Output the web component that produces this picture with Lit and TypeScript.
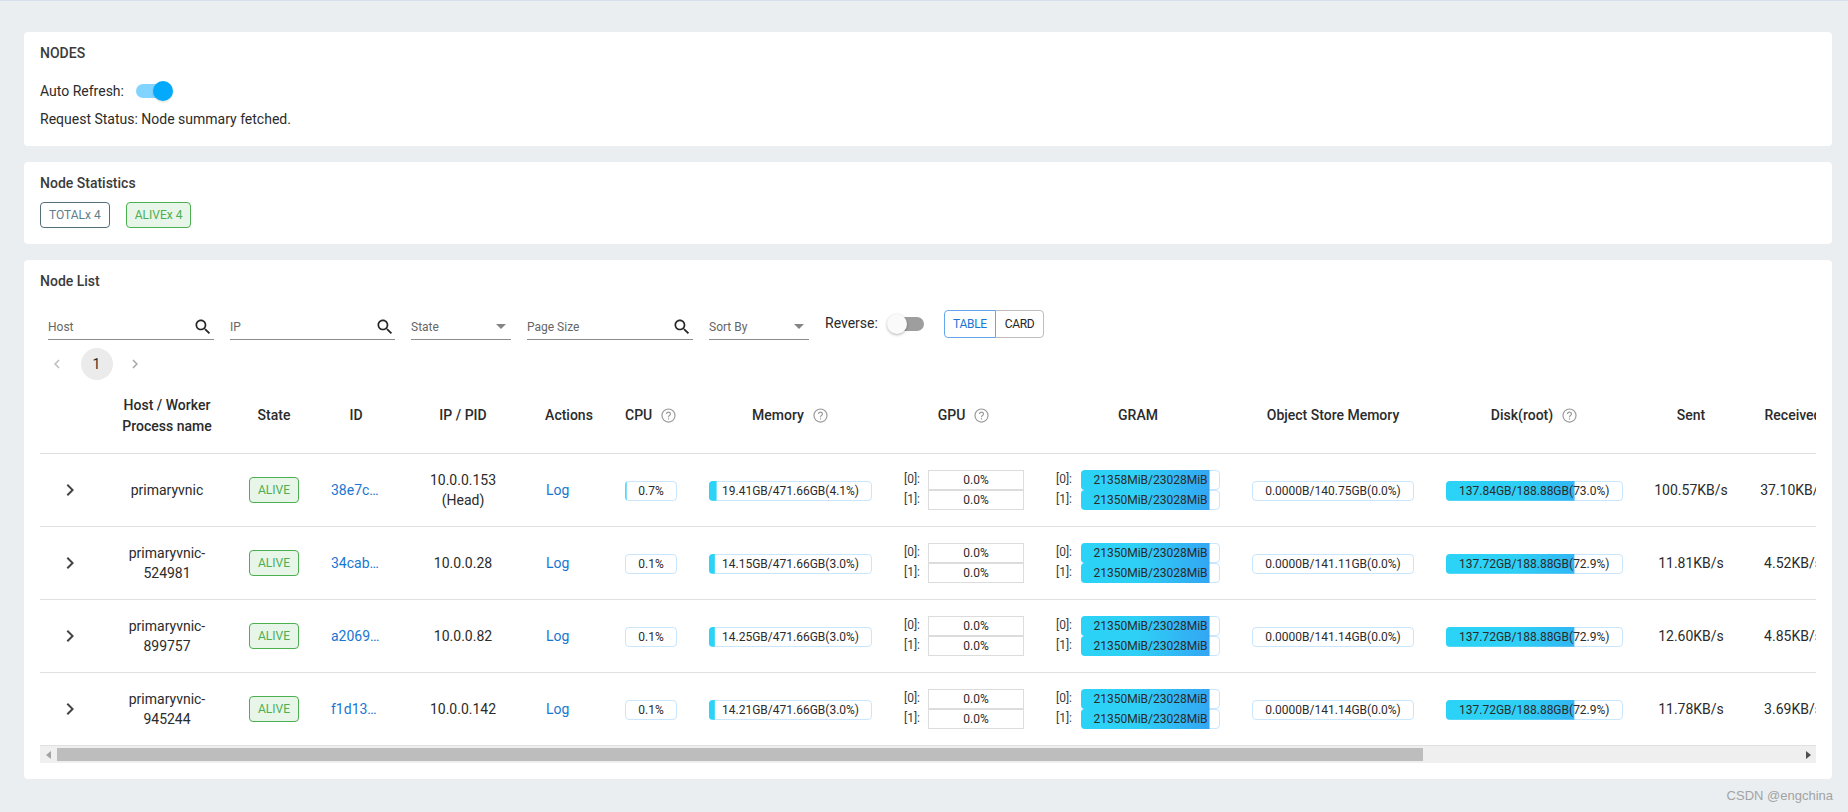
import { LitElement, html, css, svg } from "lit";
import { customElement } from "lit/decorators.js";

const searchPath = "M15.5 14h-.79l-.28-.27C15.41 12.59 16 11.11 16 9.5 16 5.91 13.09 3 9.5 3S3 5.91 3 9.5 5.91 16 9.5 16c1.61 0 3.09-.59 4.23-1.57l.27.28v.79l5 4.99L20.49 19l-4.99-5zm-6 0C7.01 14 5 11.99 5 9.5S7.01 5 9.5 5 14 7.01 14 9.5 11.99 14 9.5 14z";
const helpPath = "M11.25 17h1.5v-1.5h-1.5V17zM12 3a9 9 0 1 0 0 18 9 9 0 0 0 0-18zm0 16.5a7.5 7.5 0 1 1 0-15 7.5 7.5 0 0 1 0 15zM12 7a3.2 3.2 0 0 0-3.2 3.2h1.5a1.7 1.7 0 1 1 3.4 0c0 1.7-2.5 1.6-2.5 4h1.5c0-1.7 2.5-1.9 2.5-4A3.2 3.2 0 0 0 12 7z";

const icon = (d: string, cls: string) =>
  html`<svg class=${cls} viewBox="0 0 24 24">${svg`<path d=${d}></path>`}</svg>`;

interface Node {
  host: string[];
  id: string;
  ip: string[];
  cpu: number;
  mem: string;
  memP: number;
  gram: [string, number][];
  store: string;
  disk: string;
  diskP: number;
  sent: string;
  recv: string;
}

const nodes: Node[] = [
  { host: ["primaryvnic"], id: "38e7c…", ip: ["10.0.0.153", "(Head)"], cpu: 0.7, mem: "19.41GB/471.66GB(4.1%)", memP: 4.1,
    gram: [["21358MiB/23028MiB", 92.7], ["21350MiB/23028MiB", 92.7]], store: "0.0000B/140.75GB(0.0%)", disk: "137.84GB/188.88GB(73.0%)", diskP: 73, sent: "100.57KB/s", recv: "37.10KB/s" },
  { host: ["primaryvnic-", "524981"], id: "34cab…", ip: ["10.0.0.28"], cpu: 0.1, mem: "14.15GB/471.66GB(3.0%)", memP: 3,
    gram: [["21350MiB/23028MiB", 92.7], ["21350MiB/23028MiB", 92.7]], store: "0.0000B/141.11GB(0.0%)", disk: "137.72GB/188.88GB(72.9%)", diskP: 72.9, sent: "11.81KB/s", recv: "4.52KB/s" },
  { host: ["primaryvnic-", "899757"], id: "a2069…", ip: ["10.0.0.82"], cpu: 0.1, mem: "14.25GB/471.66GB(3.0%)", memP: 3,
    gram: [["21350MiB/23028MiB", 92.7], ["21350MiB/23028MiB", 92.7]], store: "0.0000B/141.14GB(0.0%)", disk: "137.72GB/188.88GB(72.9%)", diskP: 72.9, sent: "12.60KB/s", recv: "4.85KB/s" },
  { host: ["primaryvnic-", "945244"], id: "f1d13…", ip: ["10.0.0.142"], cpu: 0.1, mem: "14.21GB/471.66GB(3.0%)", memP: 3,
    gram: [["21350MiB/23028MiB", 92.7], ["21350MiB/23028MiB", 92.7]], store: "0.0000B/141.14GB(0.0%)", disk: "137.72GB/188.88GB(72.9%)", diskP: 72.9, sent: "11.78KB/s", recv: "3.69KB/s" },
];

const colWidths = [61, 132, 82, 82, 132, 80, 84, 194, 153, 196, 194, 208, 106, 100, 461];

@customElement("app-root")
export class AppRoot extends LitElement {
  static styles = css`
    :host {
      display: block;
      min-height: 812px;
      box-sizing: border-box;
      position: relative;
      background: #eaeef1;
      border-top: 1px solid #d5e1ec;
      padding: 31px 16px 33px 24px;
      font-family: Roboto, "Liberation Sans", sans-serif;
      font-size: 14px;
      line-height: 20px;
      color: #2b2b2b;
    }
    .card {
      background: #fff;
      border-radius: 4px;
      padding: 11px 16px 16px;
      margin-bottom: 16px;
    }
    .card:last-of-type { margin-bottom: 0; }
    .title { font-weight: 500; color: #3b3b3b; }
    .auto { display: flex; align-items: center; height: 24px; margin-top: 16px; }
    .auto .switch { margin-left: 9px; }
    .status { margin-top: 6px; margin-bottom: 1px; }
    .switch { position: relative; width: 40px; height: 20px; flex: none; }
    .track { position: absolute; left: 3px; top: 3px; width: 34px; height: 14px; border-radius: 7px; background: #9e9e9e; }
    .thumb { position: absolute; left: 0; top: 0; width: 20px; height: 20px; border-radius: 50%; background: #fafafa;
      box-shadow: 0 1px 3px rgba(0,0,0,.3); }
    .switch.on .track { background: #80d4ff; }
    .switch.on .thumb { left: 20px; background: #03a9fb; box-shadow: 0 1px 2px rgba(0,0,0,.15); }
    .tags { display: flex; gap: 16px; margin-top: 9px; }
    .tag { box-sizing: border-box; height: 26px; padding: 0 8px; display: inline-flex; align-items: center;
      font-size: 12px; border: 1px solid #546e7a; border-radius: 4px; color: #607d8b; }
    .tag.alive { border-color: #4caf50; color: #4caf50; background: #e8f5e9; }
    .filters { display: flex; margin-top: 19px; padding-left: 8px; height: 30px; }
    .field { box-sizing: border-box; height: 30px; width: 166px; margin-right: 16px; padding: 7px 1px 2px 0;
      border-bottom: 1px solid #8c8c8c; display: flex; justify-content: space-between; align-items: center;
      font-size: 12px; color: #666; }
    .field.ip { width: 165px; padding-right: 0; }
    .field.select { width: 100px; padding-right: 5px; }
    .search { width: 20px; height: 20px; fill: #262626; flex: none; }
    .caret { width: 0; height: 0; border: 5px solid transparent; border-top-color: #858585; border-bottom: 0; margin-top: -1px; }
    .reverse { display: flex; align-items: center; height: 26px; width: 102px; }
    .reverse .switch { margin-left: auto; margin-top: 2px; }
    .group { display: flex; height: 28px; margin-left: 17px; font-size: 12px; letter-spacing: -0.3px; }
    .group span { box-sizing: border-box; display: flex; align-items: center; border: 1px solid #bdbdbd; color: #262626; }
    .group .first { width: 52px; justify-content: center; color: #1976d2; border-color: #64a9ee; border-radius: 4px 0 0 4px; position: relative; z-index: 1; }
    .group .last { width: 49px; justify-content: center; margin-left: -1px; border-radius: 0 4px 4px 0; }
    .pager { display: flex; align-items: center; height: 32px; margin-top: 8px; padding-left: 8px; }
    .pager svg { width: 18px; height: 18px; fill: #bdbdbd; flex: none; }
    .pager svg.next { fill: #a8a8a8; }
    .page { width: 32px; height: 32px; border-radius: 50%; background: #ebebeb; display: flex; align-items: center; justify-content: center; margin: 0 13.5px 0 14.5px; }
    .scroll { overflow: hidden; }
    .scrollbar { display: flex; align-items: center; height: 17px; background: #efefef; }
    .sb-btn { width: 17px; height: 17px; flex: none; display: flex; align-items: center; justify-content: center; }
    .sb-btn svg { width: 6px; height: 8px; }
    .sb-btn.left svg { fill: #a3a3a3; }
    .sb-btn.right svg { fill: #505050; }
    .sb-thumb { width: 1366px; height: 13px; background: #bdbdbd; flex: none; }
    .sb-rest { flex: 1; }
    table { border-collapse: separate; border-spacing: 0; table-layout: fixed; width: 2265px; }
    th, td { box-sizing: border-box; padding: 0 16px; text-align: center; border-bottom: 1px solid #e0e0e0; white-space: nowrap; font-weight: 400; }
    th { height: 74px; font-weight: 500; line-height: 21px; padding-bottom: 2px; color: #2b2b2b; }
    td { height: 73px; }
    th:nth-child(8), th:nth-child(9), th:nth-child(12) { padding-left: 18px; }
    th:nth-child(14), td:nth-child(14) { padding-right: 18px; }
    .wrap { white-space: normal; }
    .help { width: 19px; height: 19px; fill: #9a9a9a; vertical-align: -5px; margin-left: 7px; }
    .chev { display: block; width: 24px; height: 24px; fill: #444; margin-left: 2px; }
    td.exp { padding: 0 0 0 16px; text-align: left; }
    .link { color: #1976d2; }
    td.id { text-align: left; padding-left: 16px; }
    td.log { text-align: left; padding-left: 17px; }
    td.gpuc { padding-left: 17px; }
    .bar { position: relative; box-sizing: border-box; display: inline-flex; justify-content: center; align-items: center; vertical-align: middle;
      height: 20px; padding: 0 12px; font-size: 12px; border: 1px solid #c9e6fc; border-radius: 4px; background: #fff; }
    .fill { position: absolute; inset: -1px; border-radius: 4px; background: linear-gradient(90deg, #2bd3f7, #2fd0f5 40%, #33a0f3); }
    .bar b { position: relative; font-weight: 400; line-height: 18px; }
    .stack { display: flex; flex-direction: column; align-items: flex-start; }
    .line { display: flex; height: 20px; font-size: 12px; line-height: 18px; color: #3d3d3d; }
    .line i { font-style: normal; width: 24px; text-align: left; }
    .gram i { width: 25px; }
    .gpu { box-sizing: border-box; width: 96px; height: 20px; border: 1px solid #dcdcdc; text-align: center; color: #2b2b2b; }
    .gram .bar { width: 139px; color: #2b2b2b; }
    .mark { position: absolute; right: 15px; top: 785px; font-size: 13px; line-height: 20px; color: #a3a3a3; font-family: "Liberation Sans", sans-serif; }
  `;

  private bar(text: string, pct: number) {
    const clip = pct < 0.3 ? "clip-path: inset(0 100% 0 0)" : `clip-path: inset(0 calc(${100 - pct * 0.99}% - 1px) 0 0)`;
    return html`<span class="bar"><span class="fill" style=${clip}></span><b>${text}</b></span>`;
  }

  private head(label: string | string[], help = false) {
    const lines = Array.isArray(label) ? label : [label];
    return html`<th class=${lines.length > 1 ? "wrap" : ""}>
      ${lines.map((l, i) => html`${i ? html`<br />` : ""}${l}`)}${help ? icon(helpPath, "help") : ""}
    </th>`;
  }

  private row(n: Node) {
    return html`<tr>
      <td class="exp">${icon("M10 6 8.59 7.41 13.17 12l-4.58 4.59L10 18l6-6z", "chev")}</td>
      <td>${n.host.map((l, i) => html`${i ? html`<br />` : ""}${l}`)}</td>
      <td><span class="tag alive">ALIVE</span></td>
      <td class="link id">${n.id}</td>
      <td>${n.ip.map((l, i) => html`${i ? html`<br />` : ""}${l}`)}</td>
      <td class="link log">Log</td>
      <td>${this.bar(`${n.cpu.toFixed(1)}%`, n.cpu)}</td>
      <td>${this.bar(n.mem, n.memP)}</td>
      <td class="gpuc"><div class="stack">
        ${[0, 1].map((i) => html`<div class="line"><i>[${i}]:</i><div class="gpu">0.0%</div></div>`)}
      </div></td>
      <td><div class="stack">
        ${n.gram.map(([t, p], i) => html`<div class="line gram"><i>[${i}]:</i>${this.bar(t, p)}</div>`)}
      </div></td>
      <td>${this.bar(n.store, 0)}</td>
      <td>${this.bar(n.disk, n.diskP)}</td>
      <td>${n.sent}</td>
      <td>${n.recv}</td>
      <td></td>
    </tr>`;
  }

  render() {
    return html`
      <section class="card">
        <div class="title">NODES</div>
        <div class="auto">Auto Refresh:<div class="switch on"><div class="track"></div><div class="thumb"></div></div></div>
        <div class="status">Request Status: Node summary fetched.</div>
      </section>
      <section class="card">
        <div class="title">Node Statistics</div>
        <div class="tags"><span class="tag">TOTALx 4</span><span class="tag alive">ALIVEx 4</span></div>
      </section>
      <section class="card">
        <div class="title">Node List</div>
        <div class="filters">
          <div class="field">Host${icon(searchPath, "search")}</div>
          <div class="field ip">IP${icon(searchPath, "search")}</div>
          <div class="field select">State<span class="caret"></span></div>
          <div class="field">Page Size${icon(searchPath, "search")}</div>
          <div class="field select">Sort By<span class="caret"></span></div>
          <div class="reverse">Reverse:<div class="switch"><div class="track"></div><div class="thumb"></div></div></div>
          <div class="group"><span class="first">TABLE</span><span class="last">CARD</span></div>
        </div>
        <div class="pager">
          ${icon("M15.41 7.41 14 6l-6 6 6 6 1.41-1.41L10.83 12z", "prev")}
          <div class="page">1</div>
          ${icon("M10 6 8.59 7.41 13.17 12l-4.58 4.59L10 18l6-6z", "next")}
        </div>
        <div class="scroll">
          <table>
            <colgroup>${colWidths.map((w) => html`<col style=${`width:${w}px`} />`)}</colgroup>
            <thead><tr>
              <th></th>
              ${this.head(["Host / Worker", "Process name"])}
              ${this.head("State")}
              ${this.head("ID")}
              ${this.head("IP / PID")}
              ${this.head("Actions")}
              ${this.head("CPU", true)}
              ${this.head("Memory", true)}
              ${this.head("GPU", true)}
              ${this.head("GRAM")}
              ${this.head("Object Store Memory")}
              ${this.head("Disk(root)", true)}
              ${this.head("Sent")}
              ${this.head("Received")}
              <th></th>
            </tr></thead>
            <tbody>${nodes.map((n) => this.row(n))}</tbody>
          </table>
        </div>
        <div class="scrollbar">
          <div class="sb-btn left"><svg viewBox="0 0 6 8"><path d="M5 0v8L0 4z"></path></svg></div>
          <div class="sb-thumb"></div>
          <div class="sb-rest"></div>
          <div class="sb-btn right"><svg viewBox="0 0 6 8"><path d="M1 0v8l5-4z"></path></svg></div>
        </div>
      </section>
      <div class="mark">CSDN @engchina</div>
    `;
  }
}
